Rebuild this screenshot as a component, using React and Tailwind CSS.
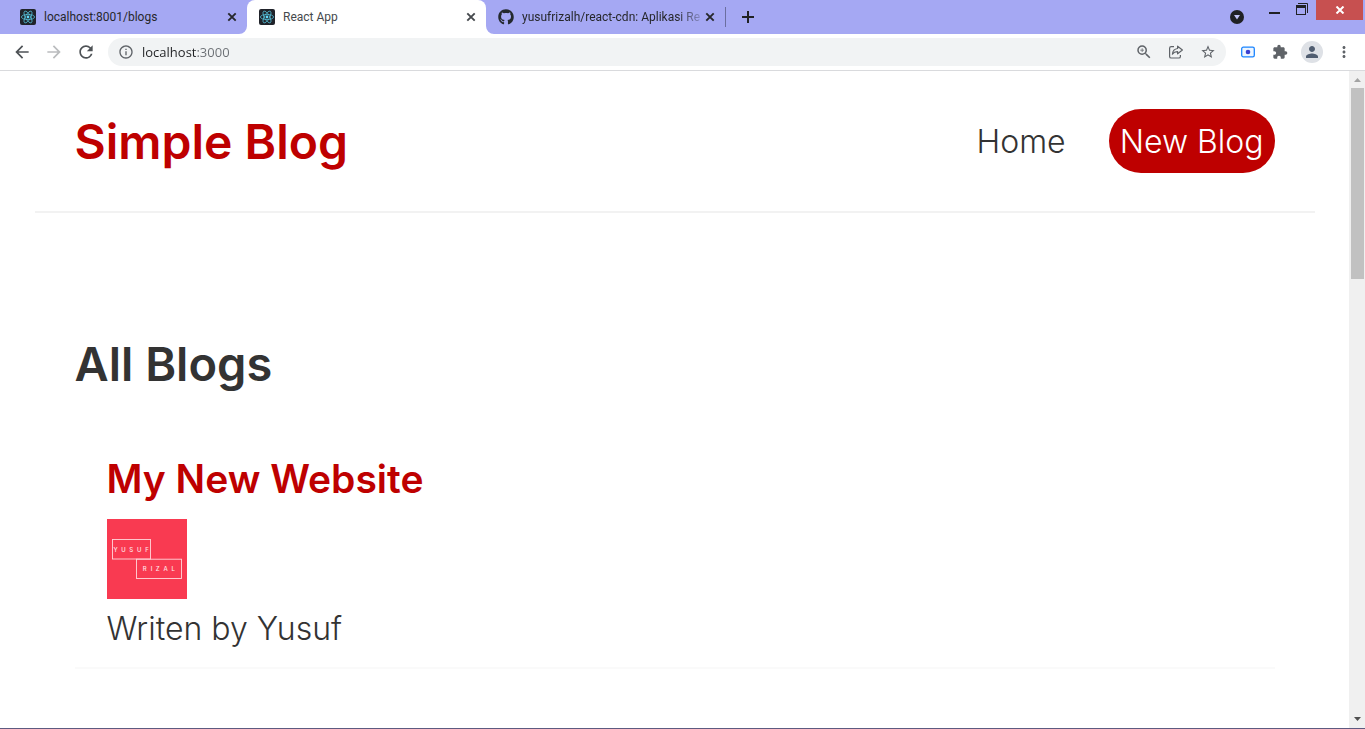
import React from "react";
import {
  MdArrowBack,
  MdArrowForward,
  MdRefresh,
  MdInfoOutline,
  MdZoomIn,
  MdStarBorder,
  MdExtension,
  MdPerson,
  MdMoreVert,
} from "react-icons/md";
import { FaGithub } from "react-icons/fa";

function ReactMark() {
  return (
    <svg viewBox="0 0 16 16" className="size-4 shrink-0" aria-hidden="true">
      <rect width="16" height="16" rx="2" fill="#20232a" />
      <g fill="none" stroke="#53b9d1" strokeWidth="0.8">
        <ellipse cx="8" cy="8" rx="6.6" ry="2.6" />
        <ellipse cx="8" cy="8" rx="6.6" ry="2.6" transform="rotate(60 8 8)" />
        <ellipse cx="8" cy="8" rx="6.6" ry="2.6" transform="rotate(120 8 8)" />
      </g>
      <circle cx="8" cy="8" r="1.4" fill="#61dafb" />
    </svg>
  );
}

function CloseIcon() {
  return (
    <svg viewBox="0 0 16 16" className="size-4" aria-hidden="true">
      <path d="M4.3 4.3l7.4 7.4M11.7 4.3l-7.4 7.4" stroke="currentColor" strokeWidth="1.9" fill="none" />
    </svg>
  );
}

function TabFoot({ side }) {
  return side === "left" ? (
    <svg viewBox="0 0 8 8" className="absolute bottom-0 -left-2 size-2" aria-hidden="true">
      <path d="M8 0v8H0a8 8 0 0 0 8-8z" fill="#fff" />
    </svg>
  ) : (
    <svg viewBox="0 0 8 8" className="absolute -right-2 bottom-0 size-2" aria-hidden="true">
      <path d="M0 0v8h8a8 8 0 0 1-8-8z" fill="#fff" />
    </svg>
  );
}

function Tab({ icon, title, active, fade }) {
  return (
    <div
      role="tab"
      aria-selected={!!active}
      className={
        "relative flex w-[239px] items-center pr-[7px] pl-3 font-['Roboto',sans-serif] text-xs " +
        (active ? "rounded-t-lg bg-white text-[#45494d]" : "text-[#26272b]")
      }
    >
      {active && <TabFoot side="left" />}
      {icon}
      <span
        className={
          "ml-2 min-w-0 flex-1 overflow-hidden whitespace-nowrap " +
          (fade ? "mask-[linear-gradient(to_right,#000_155px,transparent_185px)]" : "")
        }
      >
        {title}
      </span>
      <button type="button" aria-label={"Close " + title} className="shrink-0">
        <CloseIcon />
      </button>
      {active && <TabFoot side="right" />}
    </div>
  );
}

function TabStrip() {
  return (
    <div className="flex h-[34px] shrink-0 items-stretch bg-[#a5a8f3]">
      <div role="tablist" className="flex pl-2">
        <Tab icon={<ReactMark />} title="localhost:8001/blogs" />
        <Tab icon={<ReactMark />} title="React App" active />
        <Tab
          icon={<FaGithub className="size-4 shrink-0 text-[#24292f]" />}
          title="yusufrizalh/react-cdn: Aplikasi Re"
          fade
        />
      </div>
      <div className="my-[7px] w-px bg-[#6b6e9f]" />
      <button type="button" aria-label="New tab" className="ml-3 self-center text-[#202124]">
        <svg viewBox="0 0 20 20" className="size-5" aria-hidden="true">
          <path d="M10 4v12M4 10h12" stroke="currentColor" strokeWidth="2" />
        </svg>
      </button>
      <div className="ml-auto flex items-start text-[#202124]">
        <button type="button" aria-label="Search tabs" className="mr-[25px] self-center">
          <svg viewBox="0 0 14 14" className="size-3.5" aria-hidden="true">
            <circle cx="7" cy="7" r="7" fill="currentColor" />
            <path d="M4 5h6l-3 4.5z" fill="#c3c5f8" />
          </svg>
        </button>
        <button type="button" aria-label="Minimize" className="mr-4">
          <svg viewBox="0 0 11 16" className="h-4 w-[11px]" aria-hidden="true">
            <path d="M0 12h11v2H0z" fill="currentColor" />
          </svg>
        </button>
        <button type="button" aria-label="Restore" className="mr-2">
          <svg viewBox="0 0 12 16" className="h-4 w-3" aria-hidden="true">
            <path d="M0 5h10v10H0zM1 8v6h8V8z" fill="currentColor" fillRule="evenodd" />
            <path d="M2 3.5h9.5V13" fill="none" stroke="currentColor" />
          </svg>
        </button>
        <button
          type="button"
          aria-label="Close window"
          className="mr-0.5 flex h-5 w-[47px] items-center justify-center bg-[#c75050] text-white"
        >
          <svg viewBox="0 0 10 8" className="h-2 w-2.5" aria-hidden="true">
            <path d="M1.5 0.5l7 7M8.5 0.5l-7 7" stroke="currentColor" strokeWidth="2" />
          </svg>
        </button>
      </div>
    </div>
  );
}

function Toolbar() {
  return (
    <div className="flex h-[37px] shrink-0 items-center border-b border-[#d9dadd] bg-white pr-3 pl-3 text-[#5f6368]">
      <div className="flex gap-3">
        <button type="button" aria-label="Back">
          <MdArrowBack className="size-5 text-[#4e5256]" />
        </button>
        <button type="button" aria-label="Forward">
          <MdArrowForward className="size-5 text-[#babcbe]" />
        </button>
        <button type="button" aria-label="Reload">
          <MdRefresh className="size-5 text-[#4e5256]" />
        </button>
      </div>
      <div className="ml-3 flex h-7 flex-1 items-center rounded-full bg-[#f1f3f4] pr-2.5 pl-2.5">
        <MdInfoOutline className="size-4 shrink-0" />
        <input
          aria-label="Address"
          defaultValue="localhost:3000"
          className="ml-2 min-w-0 flex-1 bg-[linear-gradient(to_right,#202124_54px,#6a6e73_54px)] bg-clip-text text-[13px] leading-5 text-transparent outline-none"
        />
        <div className="flex items-center gap-4">
          <button type="button" aria-label="Zoom" className="-mr-px">
            <MdZoomIn className="size-[18px]" />
          </button>
          <button type="button" aria-label="Share this page">
            <svg viewBox="0 0 16 16" className="size-4" fill="none" stroke="currentColor" strokeWidth="1.2" aria-hidden="true">
              <path d="M6 2.600H3.200Q1.600 2.600 1.600 4.200v8.200Q1.600 14 3.200 14h7.600q1.600 0 1.600-1.600V11" />
              <path d="M9.600 2.200L14.400 6 9.600 9.800V7.600C7.200 7.500 5.600 8.400 4.400 10.200 4.700 7 6.300 4.900 9.600 4.500z" strokeLinejoin="round" />
            </svg>
          </button>
          <button type="button" aria-label="Bookmark this page">
            <MdStarBorder className="size-4" />
          </button>
        </div>
      </div>
      <div className="ml-3.5 flex items-center">
        <button type="button" aria-label="Screen recorder">
          <svg viewBox="0 0 16 16" className="size-4" aria-hidden="true">
            <rect x="1.7" y="3.2" width="12.6" height="9.6" rx="1.6" fill="#eef6ff" stroke="#1a84ff" strokeWidth="1.3" />
            <circle cx="8" cy="8" r="2.3" fill="#3a3fd0" />
          </svg>
        </button>
        <button type="button" aria-label="Extensions" className="ml-4">
          <MdExtension className="size-4" />
        </button>
        <button
          type="button"
          aria-label="Profile"
          className="ml-[13px] flex size-[22px] items-center justify-center rounded-full bg-[#dee1e6] text-[#505d70]"
        >
          <MdPerson className="size-[18px]" />
        </button>
        <button type="button" aria-label="Menu" className="ml-3">
          <MdMoreVert className="size-[18px]" />
        </button>
      </div>
    </div>
  );
}

function AuthorLogo() {
  return (
    <svg viewBox="0 0 80 80" className="size-20" role="img" aria-label="Yusuf Rizal">
      <rect width="80" height="80" fill="#f93a51" />
      <g fill="none" stroke="#ffd5da" strokeWidth="0.9">
        <rect x="5.5" y="20.5" width="38" height="19.5" />
        <rect x="29.5" y="40.2" width="45" height="19.3" />
      </g>
      <g fill="#ffe3e6" className="font-['Inter',sans-serif] text-[6px] font-medium">
        <text x="6.6 14.2 22.3 30 38.2" y="33">YUSUF</text>
        <text x="35.8 43.8 48.8 56.4 64.6" y="52">RIZAL</text>
      </g>
    </svg>
  );
}

function BlogPage() {
  return (
    <div className="min-w-0 flex-1 overflow-hidden bg-white font-['Inter',sans-serif] text-[#333]">
      <nav className="mx-auto flex max-w-7xl items-center border-b-2 border-[#f2f2f2] px-10 py-[38px]">
        <h1 className="pt-0.5 text-[48px] leading-[60px] font-semibold text-[#be0000]">Simple Blog</h1>
        <div className="ml-auto flex items-center gap-8 text-[32px] leading-10 font-light">
          <a href="#home" className="px-[11px] pt-[13px] pb-[11px]">
            Home
          </a>
          <a href="#create" className="rounded-[32px] bg-[#be0000] px-[11px] pt-[13px] pb-[11px] text-white">
            New Blog
          </a>
        </div>
      </nav>
      <main className="mx-auto max-w-7xl px-10 pt-[121px]">
        <h2 className="text-[47px] leading-[60px] font-semibold">All Blogs</h2>
        <article className="mt-10 border-b-2 border-[#fafafa] px-8 pt-5 pb-[18px]">
          <h3 className="text-[39px] leading-[50px] font-semibold text-[#be0000]">My New Website</h3>
          <div className="mt-[15px] flex">
            <AuthorLogo />
          </div>
          <p className="mt-2.5 text-[32px] leading-10 font-light">Writen by Yusuf</p>
        </article>
      </main>
    </div>
  );
}

function ScrollBar() {
  return (
    <div className="flex w-4 shrink-0 flex-col items-center bg-[#f0f0f0]" aria-hidden="true">
      <svg viewBox="0 0 16 17" className="h-[17px] w-4">
        <path d="M5 11l3.5-4 3.5 4z" fill="#a3a3a3" />
      </svg>
      <div className="ml-px h-[191px] w-[13px] bg-[#c1c1c1]" />
      <svg viewBox="0 0 16 17" className="mt-auto h-[17px] w-4">
        <path d="M5 6h7L8.500 10z" fill="#505050" />
      </svg>
    </div>
  );
}

export default function App() {
  return (
    <div className="flex h-screen flex-col overflow-hidden border-b border-[#5d5a80] bg-white font-['Open_Sans',sans-serif]">
      <TabStrip />
      <Toolbar />
      <div className="flex min-h-0 flex-1">
        <BlogPage />
        <ScrollBar />
      </div>
    </div>
  );
}
